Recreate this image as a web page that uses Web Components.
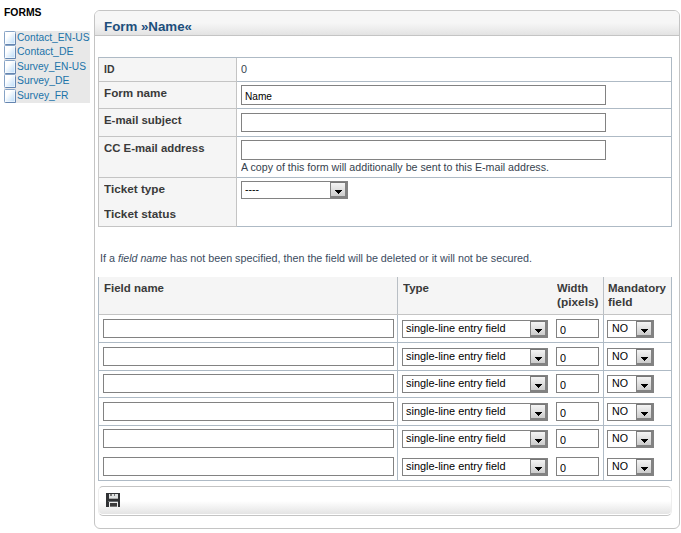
<!DOCTYPE html>
<html lang="en">
<head>
<meta charset="utf-8">
<title>Form Name</title>
<style>
html, body { margin: 0; background: #fff; }
body { width: 681px; height: 533px; overflow: hidden; font: 10px/12px "Liberation Sans", Arial, sans-serif; color: #36424e; }
</style>
</head>
<body>
<forms-page></forms-page>
<script>
const define = (name, css, html, setup) => {
  const template = document.createElement('template');
  template.innerHTML = `<style>*{box-sizing:border-box}${css}</style>${html}`;
  customElements.define(name, class extends HTMLElement {
    constructor() {
      super();
      this.attachShadow({ mode: 'open' }).append(template.content.cloneNode(true));
    }
    connectedCallback() { if (setup) setup(this, this.shadowRoot); }
  });
};

// A run of text stretched to the width given in its "w" attribute.
define('fit-text', `:host{display:inline-block;white-space:pre}span{display:inline-block;transform-origin:0 50%}`,
  `<span><slot></slot></span>`, (el, root) => {
    const span = root.querySelector('span');
    const natural = span.getBoundingClientRect().width;
    const target = Number(el.getAttribute('w'));
    if (target && natural) {
      span.style.transform = `scaleX(${target / natural})`;
      el.style.width = target + 'px';
    }
  });

define('text-field', `
  :host{display:block;height:19px;border:1px solid #828282;background:#fff;color:#000;padding:5px 0 0 3px;line-height:11px}`,
  `<slot></slot>`);

define('select-box', `
  :host{display:flex;height:18px;border:1px solid #828282;background:#fff;color:#000;line-height:11px}
  .value{flex:1;padding:2px 0 0 3px}
  .button{width:17px;height:16px;border:1px solid #828282;border-right-width:2px;border-bottom-width:2px;border-top-color:#777;
    background:linear-gradient(#f4f4f4,#ddd 60%,#ccc);display:flex;align-items:center;justify-content:center;padding:4px 0 0 1px}
  svg{display:block}`,
  `<div class="value"><slot></slot></div><div class="button"><svg width="7" height="4" shape-rendering="crispEdges"><path d="M0 0h7v1h-1v1h-1v1h-1v1h-1v-1h-1v-1h-1v-1h-1z" fill="#000"/></svg></div>`);

define('nav-item', `
  :host{display:flex;height:14.4px;color:#1b73a9;line-height:14px}
  svg{flex:none;display:block;margin-right:1px}`,
  `<svg width="12" height="14" viewBox="0 0 12 14"><defs><linearGradient id="g" x2="1" y2="1"><stop offset=".3" stop-color="#fff"/><stop offset="1" stop-color="#bcdcf8"/></linearGradient></defs><rect x=".5" y=".5" width="11" height="13" rx="1" fill="#fff" stroke="#86a3c6"/><rect x="1.5" y="1.5" width="9" height="11" fill="url(#g)"/><path d="M11.5 3v10.500h-10" fill="none" stroke="#6485b0"/></svg><slot></slot>`);

define('forms-nav', `
  :host{display:block;width:90px;padding:7px 0 0 4px}
  h1{margin:0 0 12px;font-size:10px;line-height:12px;font-weight:bold;color:#000}
  .list{background:#e8e8e8;height:72px}`, `
  <h1><fit-text w="37.500">FORMS</fit-text></h1>
  <div class="list">
    <nav-item><fit-text w="72.500">Contact_EN-US</fit-text></nav-item>
    <nav-item><fit-text w="56.500">Contact_DE</fit-text></nav-item>
    <nav-item><fit-text w="69">Survey_EN-US</fit-text></nav-item>
    <nav-item><fit-text w="52.500">Survey_DE</fit-text></nav-item>
    <nav-item><fit-text w="51.500">Survey_FR</fit-text></nav-item>
  </div>`);

define('detail-row', `
  :host{display:grid;grid-template-columns:138px 1fr;border-bottom:1px solid #aebac5}
  .label{background:#f5f5f5;border-right:1px solid #c4c4c4;padding:5px 0 0 5px;font-weight:bold;font-size:11px;line-height:13px;color:#3a3a3a;
    margin-bottom:-1px;border-bottom:1px solid #c4c4c4}
  .value{padding:3px 0 0 4px}`,
  `<div class="label"><slot name="label"></slot></div><div class="value"><slot></slot></div>`);

define('form-details', `
  :host{display:block;border:1px solid #aebac5;border-bottom:0;border-left-color:#c4c4c4;width:574px;margin-left:3px}
  text-field{width:365px;height:20px}
  .id{height:24px}.name{height:27px}.subject{height:28px}.cc{height:41px}.ticket{height:49px}
  .subject text-field{height:19px;margin-top:1px}
  select-box{width:107px}
  .zero{padding-top:3px}
  .hint{padding-top:2px}
  .stack{display:flex;flex-direction:column;gap:12px}`, `
  <detail-row class="id"><fit-text slot="label" w="10.500">ID</fit-text><div class="zero"><fit-text w="6">0</fit-text></div></detail-row>
  <detail-row class="name"><fit-text slot="label" w="63">Form name</fit-text><text-field><fit-text w="27">Name</fit-text></text-field></detail-row>
  <detail-row class="subject"><fit-text slot="label" w="77.500">E-mail subject</fit-text><text-field></text-field></detail-row>
  <detail-row class="cc"><fit-text slot="label" w="100.500">CC E-mail address</fit-text><text-field></text-field><div class="hint"><fit-text w="308">A copy of this form will additionally be sent to this E-mail address.</fit-text></div></detail-row>
  <detail-row class="ticket"><div slot="label" class="stack"><fit-text w="61">Ticket type</fit-text><fit-text w="72">Ticket status</fit-text></div><select-box><fit-text w="14">----</fit-text></select-box></detail-row>`);

define('field-row', `
  :host{display:grid;grid-template-columns:299px 206px 1fr;height:28px;border-bottom:1px solid #aebac5}
  :host([short]){height:27px}
  :host([joined]){border-bottom-color:transparent}
  .cell{display:flex;align-items:flex-start;padding:4px 0 0 4px;border-right:1px solid #aebac5;margin-bottom:-1px}
  :host([high]) .cell{padding-top:3px}
  .cell:last-child{border-right:0;padding-left:3px}
  .name{width:291px}.type{width:146px;margin-right:8px}.width{width:43px}.mandatory{width:47px}
  select-box{margin-top:1px}
  .mandatory fit-text{margin-left:1px}`, `
  <div class="cell"><text-field class="name"></text-field></div>
  <div class="cell"><select-box class="type"><fit-text w="99.500">single-line entry field</fit-text></select-box><text-field class="width"><fit-text w="6">0</fit-text></text-field></div>
  <div class="cell"><select-box class="mandatory"><fit-text w="16">NO</fit-text></select-box></div>`);

define('fields-table', `
  :host{display:block;width:574px;margin-left:3px;border:1px solid #aebac5;border-top:0;border-bottom:0}
  .head{display:grid;grid-template-columns:299px 206px 1fr;height:38px;background:#f5f5f5;border-bottom:1px solid #c4c4c4;
    font-weight:bold;font-size:11px;line-height:14px;color:#3a3a3a}
  .head>div{padding:4px 0 0 5px;border-right:1px solid #b9bfc5}
  .head>div:last-child{border-right:0;padding-left:4px}
  .two{display:grid;grid-template-columns:154px 1fr}
  fit-text{display:block}`, `
  <div class="head">
    <div><fit-text w="60">Field name</fit-text></div>
    <div class="two"><fit-text w="26">Type</fit-text><div><fit-text w="31">Width</fit-text><fit-text w="41.500">(pixels)</fit-text></div></div>
    <div><fit-text w="58">Mandatory</fit-text><fit-text w="24.500">field</fit-text></div>
  </div>
  <field-row></field-row><field-row></field-row><field-row high short></field-row>
  <field-row></field-row><field-row high joined></field-row><field-row high short></field-row>`);

define('action-bar', `
  :host{display:flex;width:574px;height:30px;margin:5px 0 0 3px;border:1px solid #c4c4c4;border-left-color:#eee;border-right-color:#eee;border-radius:5px;
    background:linear-gradient(#fff 50%,#e2e2e2);box-shadow:inset 0 -1px #fff;padding:6px 0 0 7px}`, `
  <svg width="14" height="14" viewBox="0 0 14 14" shape-rendering="crispEdges">
    <path d="M0 0h14v14h-14z" fill="#303234"/>
    <path d="M3 1h9v5h-9z" fill="#dfe2e2"/><path d="M4 1h2v2h-2zM8 1h1v2h-1z" fill="#777"/><path d="M3 5h9v1h-9z" fill="#aaa"/>
    <path d="M2 8h10v1h-10z" fill="#686c70"/>
    <path d="M3 9h9v5h-9z" fill="#eee"/><path d="M4 10h7v3h-7z" fill="#3c3c3c"/><path d="M4 13h7v1h-7z" fill="#777"/>
  </svg>`);

define('form-panel', `
  :host{display:block;width:586px;height:519px;border:1px solid #c4c4c4;border-radius:6px;background:#fff;overflow:hidden}
  h2{margin:0 0 21px;height:25px;border-bottom:1px solid #c4c4c4;background:linear-gradient(#f6f6f6 50%,#e3e3e3);
    padding:7px 0 0 9px;font-size:13px;line-height:17px;color:#1d4f7c}
  p{margin:25px 0 12px 5px;line-height:13px;color:#3b4c60}`, `
  <h2><fit-text w="88">Form »Name«</fit-text></h2>
  <form-details></form-details>
  <p><fit-text w="18">If a </fit-text><em><fit-text w="49">field name</fit-text></em><fit-text w="365"> has not been specified, then the field will be deleted or it will not be secured.</fit-text></p>
  <fields-table></fields-table>
  <action-bar></action-bar>`);

define('forms-page', `:host{display:grid;grid-template-columns:94px 586px;align-items:start}form-panel{margin-top:10px}`,
  `<forms-nav></forms-nav><form-panel></form-panel>`);
</script>
</body>
</html>
